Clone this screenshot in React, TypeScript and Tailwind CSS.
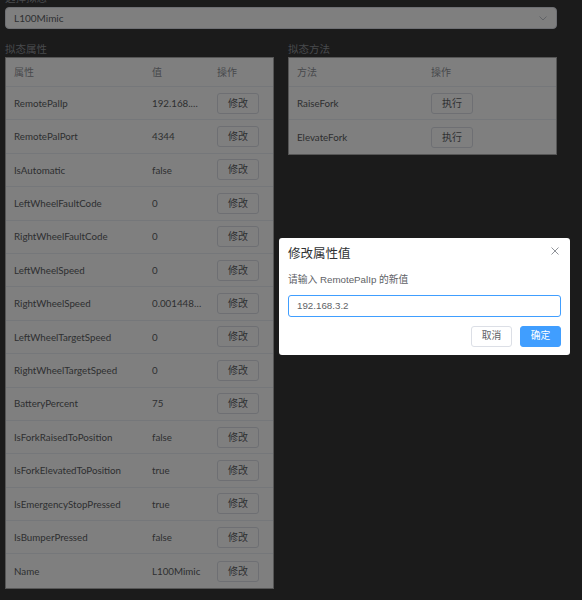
import React from 'react';

type Prop = { name: string; value: string };

const props: Prop[] = [
  { name: 'RemotePalIp', value: '192.168.3.2' },
  { name: 'RemotePalPort', value: '4344' },
  { name: 'IsAutomatic', value: 'false' },
  { name: 'LeftWheelFaultCode', value: '0' },
  { name: 'RightWheelFaultCode', value: '0' },
  { name: 'LeftWheelSpeed', value: '0' },
  { name: 'RightWheelSpeed', value: '0.0014484758' },
  { name: 'LeftWheelTargetSpeed', value: '0' },
  { name: 'RightWheelTargetSpeed', value: '0' },
  { name: 'BatteryPercent', value: '75' },
  { name: 'IsForkRaisedToPosition', value: 'false' },
  { name: 'IsForkElevatedToPosition', value: 'true' },
  { name: 'IsEmergencyStopPressed', value: 'true' },
  { name: 'IsBumperPressed', value: 'false' },
  { name: 'Name', value: 'L100Mimic' },
];

const methods = ['RaiseFork', 'ElevateFork'];

const SmallButton: React.FC<{ label: string }> = ({ label }) => (
  <button className="w-[42px] h-[21px] bg-white border border-[#dcdfe6] rounded-[3px] text-[10px] text-[#606266] flex items-center justify-center">
    {label}
  </button>
);

export default function App() {
  return (
    <div className="relative w-[582px] h-[600px] overflow-hidden bg-[#363636] font-['Lato','Noto_Sans_CJK_SC',sans-serif]">
      {/* page */}
      <div className="w-[552px] ml-[5px] mt-[-9px] flex flex-col">
        <div className="text-[10.5px] leading-[14px] text-[#909399] mb-[2px]">选择拟态</div>
        <div className="h-[22px] bg-white border border-[#dcdfe6] rounded-[4px] flex items-center justify-between pl-[8px] pr-[9px]">
          <span className="text-[10px] text-[#606266]">L100Mimic</span>
          <svg width="8" height="5" viewBox="0 0 8 5" fill="none">
            <polyline points="0.5,0.5 4,4 7.5,0.5" stroke="#c0c4cc" strokeWidth="1" />
          </svg>
        </div>

        <div className="flex gap-[14px] mt-[13px]">
          {/* properties */}
          <div className="w-[269px] flex flex-col">
            <div className="text-[10.5px] leading-[14px] text-[#909399] mb-[1px]">拟态属性</div>
            <div className="bg-white border border-[#acacac]">
              <div className="grid grid-cols-[137px_65px_1fr] h-[29px] items-center border-b border-[#ebeef5] text-[10px] text-[#909399]">
                <span className="pl-[8px]">属性</span>
                <span className="pl-[9px]">值</span>
                <span className="pl-[9px]">操作</span>
              </div>
              {props.map((p, i) => (
                <div
                  key={p.name}
                  className={`grid grid-cols-[137px_65px_1fr] h-[33.4px] items-center text-[9.75px] text-[#5c5e62] ${
                    i < props.length - 1 ? 'border-b border-[#ebeef5]' : ''
                  }`}
                >
                  <span className="pl-[8px] truncate">{p.name}</span>
                  <span className="pl-[9px] pr-[5px] truncate">{p.value}</span>
                  <span className="pl-[9px]">
                    <SmallButton label="修改" />
                  </span>
                </div>
              ))}
            </div>
          </div>

          {/* methods */}
          <div className="w-[269px] flex flex-col">
            <div className="text-[10.5px] leading-[14px] text-[#909399] mb-[1px]">拟态方法</div>
            <div className="bg-white border border-[#acacac]">
              <div className="grid grid-cols-[133px_1fr] h-[29px] items-center border-b border-[#ebeef5] text-[10px] text-[#909399]">
                <span className="pl-[8px]">方法</span>
                <span className="pl-[9px]">操作</span>
              </div>
              {methods.map((m, i) => (
                <div
                  key={m}
                  className={`grid grid-cols-[133px_1fr] h-[33.4px] items-center text-[9.75px] text-[#5c5e62] ${
                    i < methods.length - 1 ? 'border-b border-[#ebeef5]' : ''
                  }`}
                >
                  <span className="pl-[8px]">{m}</span>
                  <span className="pl-[9px]">
                    <SmallButton label="执行" />
                  </span>
                </div>
              ))}
            </div>
          </div>
        </div>
      </div>

      {/* modal overlay */}
      <div className="absolute inset-0 bg-black/50 flex items-center justify-end pr-[12px] pb-[7px]">
        <div className="w-[291px] bg-white rounded-[3px] px-[9px] pt-[8px] pb-[8px] flex flex-col font-['Liberation_Sans','Noto_Sans_CJK_SC',sans-serif]">
          <div className="flex items-start justify-between">
            <span className="text-[12.5px] leading-[16px] text-[#303133]">修改属性值</span>
            <svg width="8" height="8" viewBox="0 0 8 8" className="mt-[1px] mr-[2px]">
              <path d="M0.5 0.5 L7.5 7.5 M7.5 0.5 L0.5 7.5" stroke="#909399" strokeWidth="1" />
            </svg>
          </div>
          <div className="mt-[11px] text-[9.75px] leading-[14px] text-[#606266]">请输入 RemotePalIp 的新值</div>
          <div className="mt-[8px] h-[22px] border border-[#409eff] rounded-[3px] flex items-center pl-[8px] text-[9.75px] text-[#606266]">
            192.168.3.2
          </div>
          <div className="mt-[9px] flex justify-end gap-[8px]">
            <button className="w-[41px] h-[21px] bg-white border border-[#dcdfe6] rounded-[3px] text-[9.75px] text-[#606266]">
              取消
            </button>
            <button className="w-[41px] h-[21px] bg-[#409eff] border border-[#409eff] rounded-[3px] text-[9.75px] text-white">
              确定
            </button>
          </div>
        </div>
      </div>
    </div>
  );
}
